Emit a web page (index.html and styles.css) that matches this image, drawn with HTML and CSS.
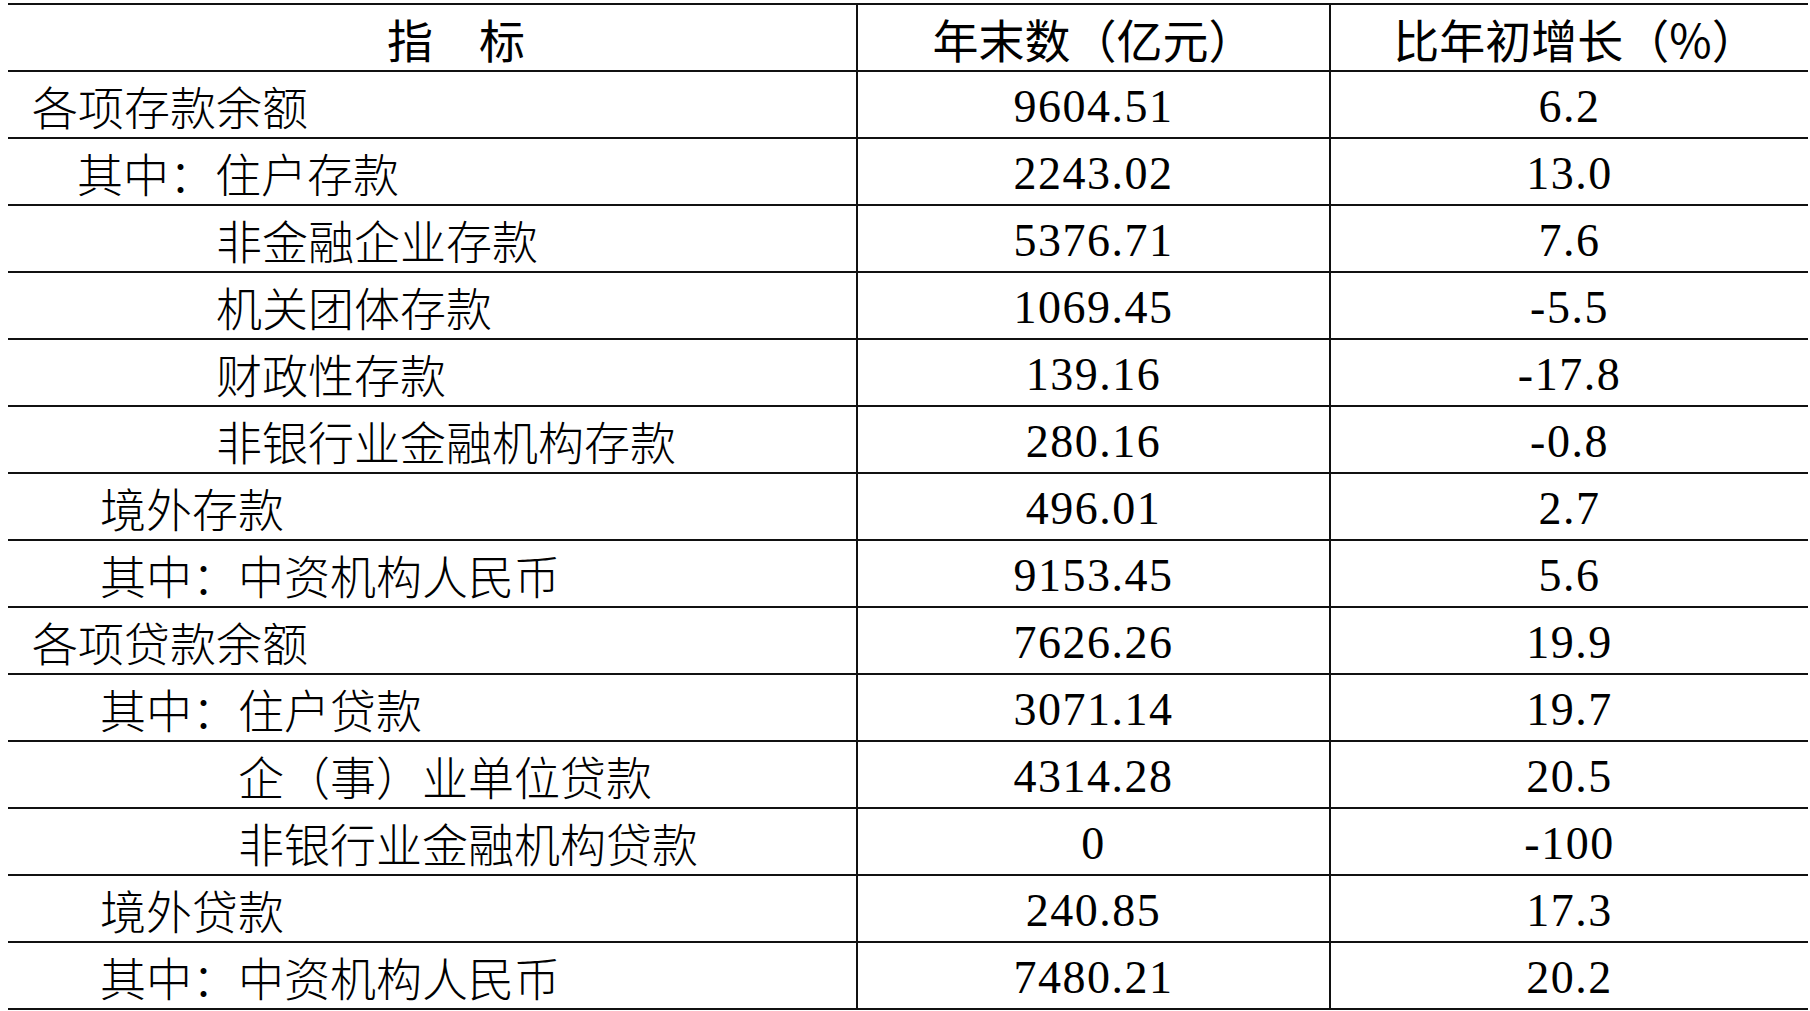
FILE: index.html
```html
<!DOCTYPE html>
<html lang="zh-CN">
<head>
<meta charset="utf-8">
<title>指标</title>
<link rel="stylesheet" href="styles.css">
</head>
<body>
<table class="tbl">
  <colgroup>
    <col class="c1">
    <col class="c2">
    <col class="c3">
  </colgroup>
  <thead>
    <tr>
      <th class="h-name">指　标</th>
      <th>年末数（亿元）</th>
      <th class="h-rate">比年初增长（%）</th>
    </tr>
  </thead>
  <tbody>
    <tr><td class="name">各项存款余额</td><td class="num">9604.51</td><td class="num">6.2</td></tr>
    <tr><td class="name i1">其中：住户存款</td><td class="num">2243.02</td><td class="num">13.0</td></tr>
    <tr><td class="name i4">非金融企业存款</td><td class="num">5376.71</td><td class="num">7.6</td></tr>
    <tr><td class="name i4">机关团体存款</td><td class="num">1069.45</td><td class="num">-5.5</td></tr>
    <tr><td class="name i4">财政性存款</td><td class="num">139.16</td><td class="num">-17.8</td></tr>
    <tr><td class="name i4">非银行业金融机构存款</td><td class="num">280.16</td><td class="num">-0.8</td></tr>
    <tr><td class="name i15">境外存款</td><td class="num">496.01</td><td class="num">2.7</td></tr>
    <tr><td class="name i15">其中：中资机构人民币</td><td class="num">9153.45</td><td class="num">5.6</td></tr>
    <tr><td class="name">各项贷款余额</td><td class="num">7626.26</td><td class="num">19.9</td></tr>
    <tr><td class="name i15">其中：住户贷款</td><td class="num">3071.14</td><td class="num">19.7</td></tr>
    <tr><td class="name i45">企（事）业单位贷款</td><td class="num">4314.28</td><td class="num">20.5</td></tr>
    <tr><td class="name i45">非银行业金融机构贷款</td><td class="num">0</td><td class="num">-100</td></tr>
    <tr><td class="name i15">境外贷款</td><td class="num">240.85</td><td class="num">17.3</td></tr>
    <tr><td class="name i15">其中：中资机构人民币</td><td class="num">7480.21</td><td class="num">20.2</td></tr>
  </tbody>
</table>
</body>
</html>
```

FILE: styles.css
```css
html, body {
  margin: 0;
  padding: 0;
  background: #ffffff;
}

body {
  padding: 3px 0 0 8px;
  overflow: hidden;
}

.tbl {
  border-collapse: collapse;
  table-layout: fixed;
  width: 1800px;
  font-family: "Liberation Serif", "Noto Sans CJK SC", serif;
  font-size: 46px;
  color: #000;
}

.c1 { width: 849px; }
.c2 { width: 473px; }
.c3 { width: 478px; }

.tbl tr {
  height: 67px;
}

.tbl th,
.tbl td {
  border: 2px solid #111;
  padding: 0;
  vertical-align: middle;
  line-height: 1;
  white-space: nowrap;
}

.tbl tr > :first-child {
  border-left: none;
}

.tbl tr > :last-child {
  border-right: none;
}

.tbl th {
  font-family: "Noto Sans CJK SC", sans-serif;
  font-weight: 400;
  text-align: center;
}

.tbl th.h-name {
  padding-left: 48px;
}

.tbl th.h-rate {
  padding-left: 12px;
}

.name {
  font-family: "Noto Sans CJK SC", sans-serif;
  font-weight: 300;
  text-align: left;
  padding-left: 24px !important;
}

.name.i1 { padding-left: 69px !important; }
.name.i15 { padding-left: 92px !important; }
.name.i4 { padding-left: 208px !important; }
.name.i45 { padding-left: 230px !important; }

.num {
  text-align: center;
  letter-spacing: 1.5px;
  padding-top: 4px !important;
}
```
